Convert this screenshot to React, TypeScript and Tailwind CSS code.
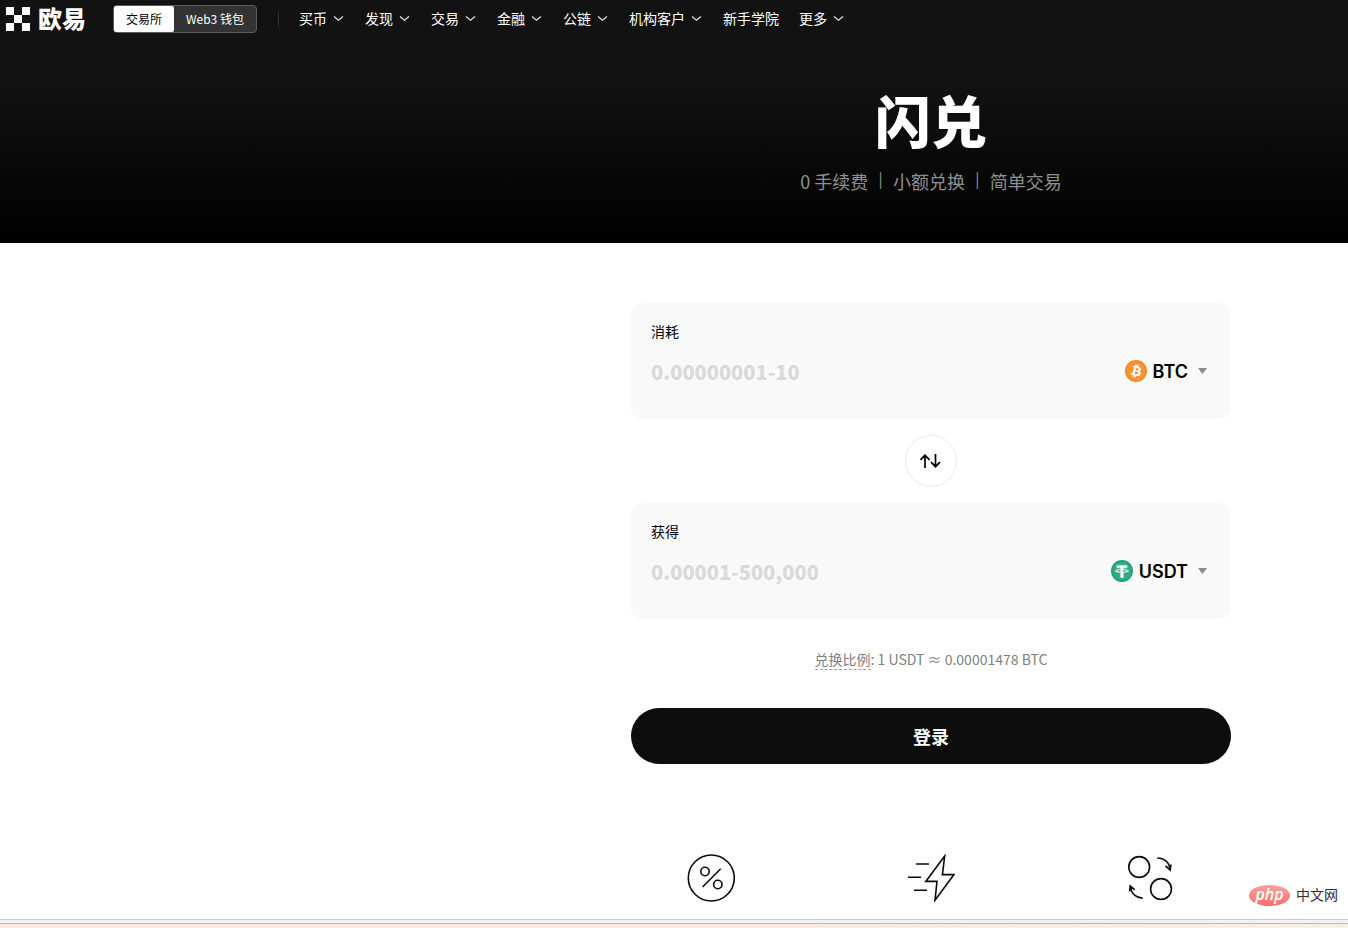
import type { ReactNode } from "react";

const navItems = [
  { label: "买币", menu: true },
  { label: "发现", menu: true },
  { label: "交易", menu: true },
  { label: "金融", menu: true },
  { label: "公链", menu: true },
  { label: "机构客户", menu: true },
  { label: "新手学院", menu: false },
  { label: "更多", menu: true },
];

function LogoMark() {
  return (
    <svg width="24" height="24" viewBox="0 0 24 24" fill="#fff" aria-hidden="true">
      <path d="M0 0h8v8H0zM16 0h8v8h-8zM8 8h8v8H8zM0 16h8v8H0zM16 16h8v8h-8z" />
    </svg>
  );
}

function Chevron() {
  return (
    <svg width="12" height="12" viewBox="0 0 12 12" fill="none" stroke="#e5e5e5" strokeWidth="1.2" aria-hidden="true">
      <path d="M1 4.5 5.500 8.200 10 4.500" />
    </svg>
  );
}

function BtcIcon() {
  return (
    <svg width="22" height="22" viewBox="0 0 32 32" aria-hidden="true">
      <circle cx="16" cy="16" r="16" fill="#f08a24" />
      <circle cx="16" cy="16" r="13.5" fill="#f7933a" />
      <path
        fill="#fff"
        d="M23.189 14.02c.314-2.096-1.283-3.223-3.465-3.975l.708-2.84-1.728-.43-.69 2.765c-.454-.114-.92-.22-1.385-.326l.695-2.783L15.596 6l-.708 2.839c-.376-.086-.746-.17-1.104-.26l.002-.009-2.384-.595-.46 1.846s1.283.294 1.256.312c.7.175.826.638.805 1.006l-.806 3.235c.048.012.11.03.18.057l-.183-.045-1.13 4.532c-.086.212-.303.531-.793.41.018.025-1.256-.313-1.256-.313l-.858 1.978 2.25.561c.418.105.828.215 1.231.318l-.715 2.872 1.727.43.708-2.84c.472.127.93.245 1.378.357l-.706 2.828 1.728.43.715-2.866c2.948.558 5.164.333 6.097-2.333.752-2.146-.037-3.385-1.588-4.192 1.13-.26 1.98-1.003 2.207-2.538m-3.95 5.538c-.533 2.147-4.148.986-5.32.695l.95-3.805c1.172.293 4.929.872 4.37 3.11m.535-5.569c-.487 1.953-3.495.96-4.47.717l.86-3.45c.975.243 4.118.696 3.61 2.733"
      />
    </svg>
  );
}

function UsdtIcon() {
  return (
    <svg width="22" height="22" viewBox="0 0 32 32" aria-hidden="true">
      <circle cx="16" cy="16" r="16" fill="#1ba27a" />
      <circle cx="16" cy="16" r="13.5" fill="#34aa85" />
      <path
        fill="#fff"
        stroke="#fff"
        strokeWidth="0.6"
        d="M17.922 17.383v-.002c-.11.008-.677.042-1.942.042-1.01 0-1.721-.03-1.971-.042v.003c-3.888-.171-6.79-.848-6.79-1.658 0-.809 2.902-1.486 6.79-1.66v2.644c.254.018.982.061 1.988.061 1.207 0 1.812-.05 1.925-.06v-2.643c3.88.173 6.775.85 6.775 1.658 0 .81-2.895 1.485-6.775 1.657m0-3.59v-2.366h5.414V7.819H8.595v3.608h5.414v2.365c-4.4.202-7.709 1.074-7.709 2.118 0 1.044 3.309 1.915 7.709 2.118v7.582h3.913v-7.584c4.393-.202 7.694-1.073 7.694-2.116 0-1.043-3.301-1.914-7.694-2.117"
      />
    </svg>
  );
}

function PercentIcon() {
  return (
    <svg width="48" height="48" viewBox="0 0 48 48" fill="none" stroke="#0b0b0b" strokeWidth="1.6" aria-hidden="true">
      <circle cx="24.3" cy="24" r="23" />
      <circle cx="18" cy="17.5" r="4.2" />
      <circle cx="30.8" cy="30.5" r="4.2" />
      <path d="M33.7 14.8 15.6 33" />
    </svg>
  );
}

function FlashIcon() {
  return (
    <svg width="48" height="48" viewBox="0 0 48 48" fill="none" stroke="#0b0b0b" strokeWidth="1.6" aria-hidden="true">
      <path d="M37.7 2 18.8 27.4H30L28 46.2 47 20.6H35.4z" />
      <path d="M9 10h13M1 23.2h13.2M7 36.2h13" />
    </svg>
  );
}

function ConvertIcon() {
  return (
    <svg width="48" height="48" viewBox="0 0 48 48" fill="none" stroke="#0b0b0b" strokeWidth="1.6" aria-hidden="true">
      <circle cx="12.2" cy="13" r="10.4" />
      <circle cx="34" cy="35" r="10.4" />
      <path d="M30.3 4C37.5 4 42.7 8.500 43 16M38.500 11.800 43.200 16.200 44 10.500" />
      <path d="M15.800 44.200C8.500 43.500 4 39.500 3.400 32M2.500 37.500 3.200 31.800 7.800 35.800" />
    </svg>
  );
}

type AmountCardProps = {
  id: string;
  label: string;
  placeholder: string;
  coin: string;
  icon: ReactNode;
};

function AmountCard({ id, label, placeholder, coin, icon }: AmountCardProps) {
  return (
    <div className="rounded-xl bg-[#f9f9f9] px-5 pt-4 pb-8">
      <label htmlFor={id} className="block text-sm leading-6 text-black">
        {label}
      </label>
      <div className="mt-3 flex h-8 items-center">
        <input
          id={id}
          type="text"
          placeholder={placeholder}
          className="h-8 min-w-0 flex-1 bg-transparent text-xl font-black text-black outline-none placeholder:text-[#d9d9d9]"
        />
        <div className="flex items-center gap-1.5 pr-1">
          {icon}
          <select
            aria-label={label + "币种"}
            className="field-sizing-content appearance-none bg-transparent pt-0.5 pr-1 font-[Inter,sans-serif] text-lg leading-6 font-semibold text-black outline-none"
          >
            <option>{coin}</option>
          </select>
          <svg width="9" height="6" viewBox="0 0 9 6" fill="#8c8c8c" aria-hidden="true">
            <path d="M0 0h9L4.500 6z" />
          </svg>
        </div>
      </div>
    </div>
  );
}

export default function App() {
  return (
    <div className="min-h-screen bg-[linear-gradient(90deg,#fbe8e3_60%,#f8f0e4)] font-['Noto_Sans_CJK_SC',sans-serif]">
      <div className="relative border-b border-[#cccccc] bg-white">
        <header className="flex h-[38px] items-center bg-[#121212] text-white">
          <a href="#" className="flex items-center gap-2 pl-1.5">
            <LogoMark />
            <span className="pb-0.5 text-2xl leading-6 font-black">欧易</span>
          </a>
          <div className="ml-[27px] flex h-7 rounded-sm border border-[#5c5c5c] bg-[#333333] text-xs">
            <button type="button" className="rounded-xs bg-white px-3 text-black">
              交易所
            </button>
            <button type="button" className="px-3 text-white">
              Web3 钱包
            </button>
          </div>
          <div className="ml-[21px] h-4 w-px bg-[#333333]" />
          <nav className="ml-5 flex items-center gap-5 pb-0.5 text-sm whitespace-nowrap">
            {navItems.map((item) => (
              <a key={item.label} href="#" className="flex items-center gap-1.5">
                {item.label}
                {item.menu && <Chevron />}
              </a>
            ))}
          </nav>
        </header>

        {/* Hero */}
        <section className="flex flex-col items-center bg-linear-to-b/srgb from-[#121212] from-20% to-black pt-[45px] pb-12 pl-[514px] text-center">
          <h1 className="text-[56px] leading-[72px] font-black text-white">闪兑</h1>
          <p className="mt-3 flex items-center text-lg leading-7 text-[#909090]">
            <span>0 手续费</span>
            <span className="mx-2.5 font-[Inter,sans-serif] text-sm leading-4">|</span>
            <span>小额兑换</span>
            <span className="mx-2.5 font-[Inter,sans-serif] text-sm leading-4">|</span>
            <span>简单交易</span>
          </p>
        </section>

        {/* Convert form */}
        <main className="flex flex-col items-center pt-15 pb-[17px] pl-[514px]">
          <form className="w-full max-w-[600px]">
            <AmountCard id="spend" label="消耗" placeholder="0.00000001-10" coin="BTC" icon={<BtcIcon />} />
            <button
              type="button"
              aria-label="切换"
              className="mx-auto my-4 flex size-13 items-center justify-center rounded-full border border-[#ebebeb] bg-white"
            >
              <svg width="22" height="14" viewBox="0 0 22 14" fill="none" stroke="#000" strokeWidth="1.7" aria-hidden="true">
                <path d="M5 14V1.300M.5 5.800 5 1.300 9.500 5.800M15.500 0v12.700M11 8.200l4.500 4.500L20 8.200" />
              </svg>
            </button>
            <AmountCard id="receive" label="获得" placeholder="0.00001-500,000" coin="USDT" icon={<UsdtIcon />} />
            <p className="mt-7 text-center text-sm leading-6 text-[#808080]">
              <span className="border-b border-dashed border-[#a0a0a0]">兑换比例</span>: 1 USDT ≈ 0.00001478 BTC
            </p>
            <button type="button" className="mt-[37px] h-14 w-full rounded-full bg-[#0d0d0d] text-lg font-bold text-white">
              登录
            </button>
          </form>
          <div className="mt-[90px] grid w-full max-w-[600px] grid-cols-3 justify-items-center gap-15">
            <PercentIcon />
            <FlashIcon />
            <ConvertIcon />
          </div>
        </main>

        <div className="absolute right-2.5 bottom-[13px] flex items-center gap-1.5">
          <span className="flex h-[21px] w-[41px] items-center justify-center rounded-[50%] bg-linear-to-b from-[#f9a09c] to-[#f86e6c] pb-0.5 font-['Open_Sans',sans-serif] text-base leading-4 font-semibold text-white italic">
            php
          </span>
          <span className="pb-0.5 text-sm leading-5 text-[#3c2a2a]">中文网</span>
        </div>
      </div>
      <div className="h-1 border-b border-[#b8b8b8] bg-[#f1f1f1]" />
    </div>
  );
}
